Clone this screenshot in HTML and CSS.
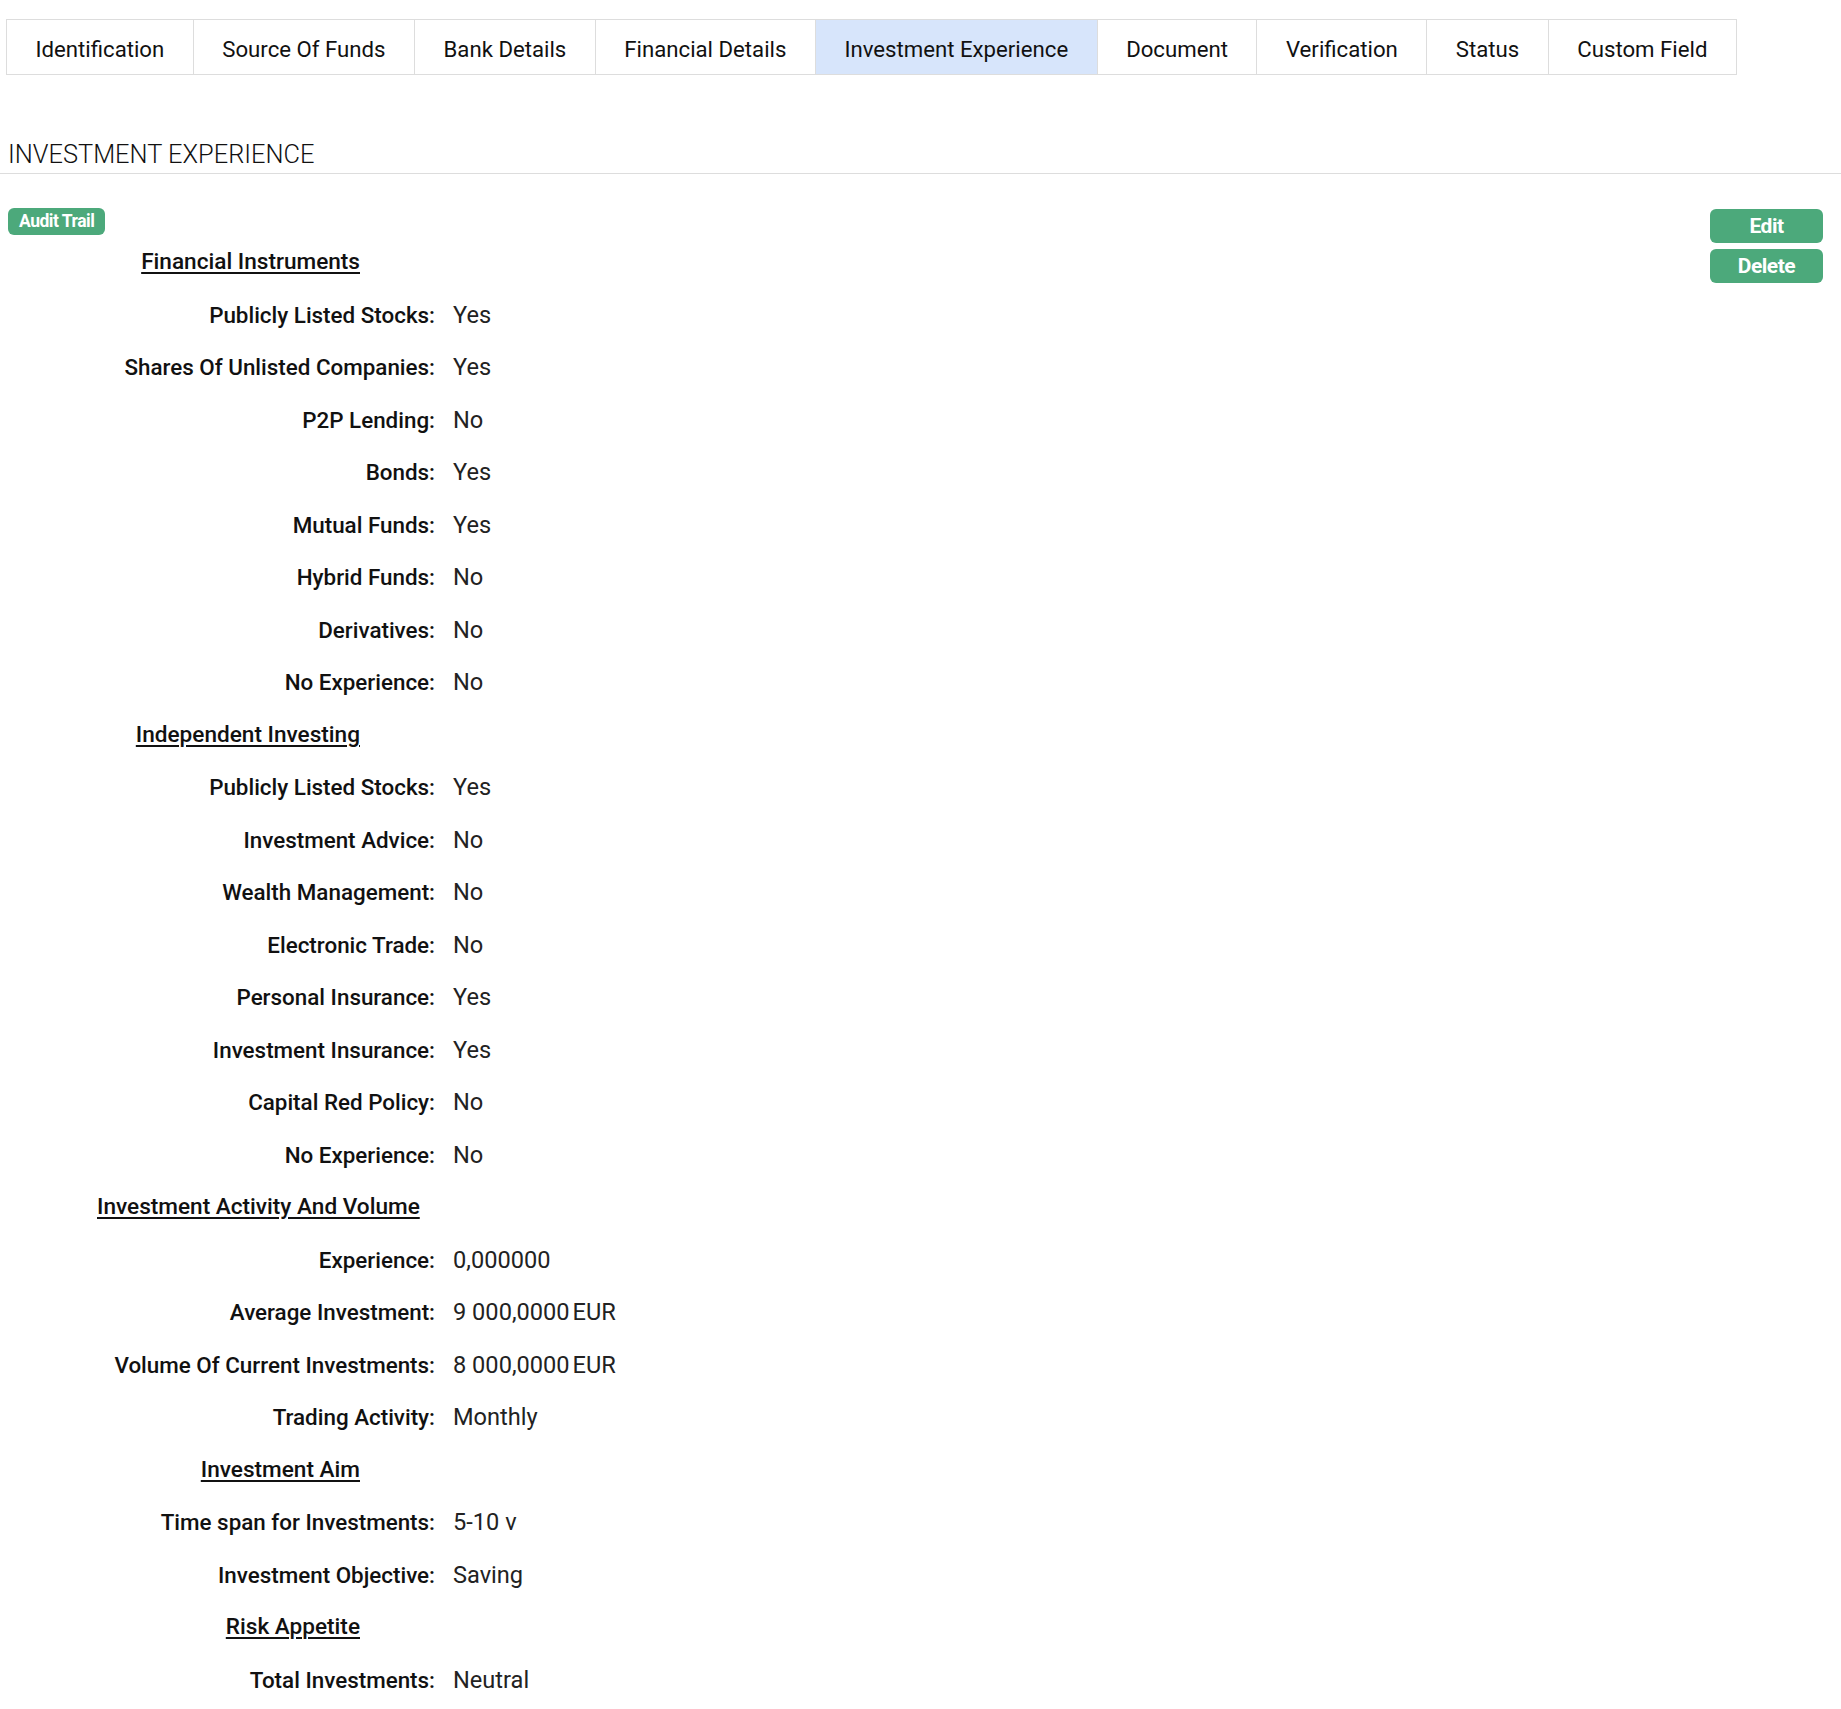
FILE: index.html
```html
<!DOCTYPE html>
<html lang="en">
<head>
<meta charset="utf-8">
<title>Investment Experience</title>
<link rel="stylesheet" href="styles.css">
</head>
<body>
<nav class="tabs">
  <a class="tab">Identification</a>
  <a class="tab">Source Of Funds</a>
  <a class="tab">Bank Details</a>
  <a class="tab">Financial Details</a>
  <a class="tab active">Investment Experience</a>
  <a class="tab">Document</a>
  <a class="tab">Verification</a>
  <a class="tab">Status</a>
  <a class="tab">Custom Field</a>
</nav>

<h2 class="section-title">INVESTMENT EXPERIENCE</h2>

<section class="panel">
  <div class="content">
    <span class="badge">Audit Trail</span>
    <div class="details">
      <div class="group"><span>Financial Instruments</span></div>
      <div class="row"><span class="label">Publicly Listed Stocks:</span><span class="value">Yes</span></div>
      <div class="row"><span class="label">Shares Of Unlisted Companies:</span><span class="value">Yes</span></div>
      <div class="row"><span class="label">P2P Lending:</span><span class="value">No</span></div>
      <div class="row"><span class="label">Bonds:</span><span class="value">Yes</span></div>
      <div class="row"><span class="label">Mutual Funds:</span><span class="value">Yes</span></div>
      <div class="row"><span class="label">Hybrid Funds:</span><span class="value">No</span></div>
      <div class="row"><span class="label">Derivatives:</span><span class="value">No</span></div>
      <div class="row"><span class="label">No Experience:</span><span class="value">No</span></div>

      <div class="group"><span>Independent Investing</span></div>
      <div class="row"><span class="label">Publicly Listed Stocks:</span><span class="value">Yes</span></div>
      <div class="row"><span class="label">Investment Advice:</span><span class="value">No</span></div>
      <div class="row"><span class="label">Wealth Management:</span><span class="value">No</span></div>
      <div class="row"><span class="label">Electronic Trade:</span><span class="value">No</span></div>
      <div class="row"><span class="label">Personal Insurance:</span><span class="value">Yes</span></div>
      <div class="row"><span class="label">Investment Insurance:</span><span class="value">Yes</span></div>
      <div class="row"><span class="label">Capital Red Policy:</span><span class="value">No</span></div>
      <div class="row"><span class="label">No Experience:</span><span class="value">No</span></div>

      <div class="group"><span>Investment Activity And Volume</span></div>
      <div class="row"><span class="label">Experience:</span><span class="value">0,000000</span></div>
      <div class="row"><span class="label">Average Investment:</span><span class="value">9 000,0000<span class="cur">EUR</span></span></div>
      <div class="row"><span class="label">Volume Of Current Investments:</span><span class="value">8 000,0000<span class="cur">EUR</span></span></div>
      <div class="row"><span class="label">Trading Activity:</span><span class="value">Monthly</span></div>

      <div class="group"><span>Investment Aim</span></div>
      <div class="row"><span class="label">Time span for Investments:</span><span class="value">5-10 v</span></div>
      <div class="row"><span class="label">Investment Objective:</span><span class="value">Saving</span></div>

      <div class="group"><span>Risk Appetite</span></div>
      <div class="row"><span class="label">Total Investments:</span><span class="value">Neutral</span></div>
    </div>
  </div>
  <div class="actions">
    <button class="btn">Edit</button>
    <button class="btn">Delete</button>
  </div>
</section>
</body>
</html>
```

FILE: styles.css
```css
html, body {
  margin: 0;
  padding: 0;
  background: #ffffff;
}

body {
  font-family: Roboto, "Liberation Sans", sans-serif;
  color: #111111;
}

.tabs {
  display: flex;
  width: fit-content;
  margin: 19px 0 0 6px;
  border-top: 1px solid #dddddd;
  border-bottom: 1px solid #dddddd;
  border-left: 1px solid #dddddd;
}

.tab {
  display: block;
  height: 50px;
  line-height: 50px;
  padding: 4px 28.5px 0;
  font-size: 22.2px;
  font-weight: 400;
  color: #111111;
  border-right: 1px solid #dddddd;
  white-space: nowrap;
}

.tab.active {
  background: #d7e5fb;
}

.section-title {
  margin: 0;
  padding: 63px 8px 3px;
  font-size: 25.4px;
  line-height: 32px;
  font-weight: 300;
  color: #111111;
  border-bottom: 1px solid #dddddd;
}

.panel {
  display: flex;
  justify-content: space-between;
  align-items: flex-start;
  padding: 34px 18px 0 8px;
}

.content {
  flex: 1;
}

.badge {
  display: inline-block;
  height: 27px;
  line-height: 27px;
  padding: 0 11px;
  background: #4ca97b;
  color: #ffffff;
  font-size: 17.5px;
  font-weight: 700;
  letter-spacing: -0.5px;
  border-radius: 6px;
  vertical-align: top;
}

.details {
  margin: 1px 0 0 -8px;
}

.group {
  height: 52.5px;
  line-height: 52.5px;
  width: 263px;
  margin-left: 97px;
  text-align: right;
  white-space: nowrap;
}

.group span {
  font-size: 22.6px;
  font-weight: 500;
  text-decoration: underline;
  text-decoration-thickness: 2px;
  text-underline-offset: 3px;
}

.row {
  display: grid;
  grid-template-columns: 435px 1fr;
  column-gap: 18px;
  height: 52.5px;
  line-height: 52.5px;
}

.label {
  text-align: right;
  font-size: 22.4px;
  font-weight: 500;
  white-space: nowrap;
}

.value {
  font-size: 23.6px;
  font-weight: 400;
  color: #222222;
  white-space: nowrap;
}

.cur {
  margin-left: 3px;
}

.actions {
  display: flex;
  flex-direction: column;
  gap: 6px;
  margin-top: 1px;
}

.btn {
  width: 113px;
  height: 34px;
  border: none;
  border-radius: 6px;
  background: #4ca97b;
  color: #ffffff;
  font-family: Roboto, "Liberation Sans", sans-serif;
  font-size: 21px;
  font-weight: 700;
  letter-spacing: -0.5px;
  padding: 0;
  cursor: pointer;
}
```
